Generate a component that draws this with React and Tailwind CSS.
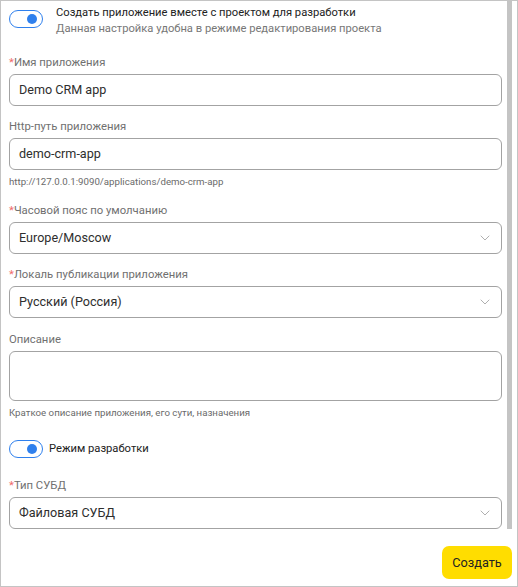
import React from 'react';

const font = { fontFamily: 'Roboto, "Noto Sans", sans-serif' };

const Toggle = () => (
  <div className="relative w-[34px] h-[18px] rounded-full border-[1.5px] border-[#2f80ed] bg-white shrink-0">
    <div className="absolute right-[5px] top-[3px] w-[10px] h-[10px] rounded-full bg-[#2f80ed]" />
  </div>
);

const Label = ({ required, children }) => (
  <div className="h-[16px] text-[11.3px] leading-[16px] text-[#707070] mb-[3px]">
    {required && <span className="text-[#f06a6a]">*</span>}
    {children}
  </div>
);

const Chevron = () => (
  <svg className="w-[10px] h-[6px] text-[#b0b0b0]" viewBox="0 0 10 6" fill="none">
    <path d="M1 1l4 4 4-4" stroke="currentColor" strokeWidth="1" strokeLinecap="round" strokeLinejoin="round" />
  </svg>
);

const Input = ({ value }) => (
  <div className="h-[32px] rounded-[6px] border border-[#a3a3a3] flex items-center px-[9px] text-[12.6px] text-[#2e2e2e]">
    {value}
  </div>
);

const Select = ({ value }) => (
  <div className="h-[32px] rounded-[6px] border border-[#a3a3a3] flex items-center justify-between pl-[9px] pr-[11px] text-[12.6px] text-[#2e2e2e]">
    <span>{value}</span>
    <Chevron />
  </div>
);

const Hint = ({ children }) => (
  <div className="text-[9.7px] leading-[14px] text-[#6a6a6a] mt-[5px]">{children}</div>
);

export default function App() {
  return (
    <div style={font} className="w-[518px] h-[587px] border border-[#c4c4c4] bg-white flex flex-col overflow-hidden">
      <div className="flex h-[528px]">
        <div className="flex-1 pl-[8px] pr-[5px] pt-[4px]">
          <div className="flex items-start gap-[13px] pt-[5px]">
            <Toggle />
            <div className="-mt-[5px]">
              <div className="text-[11.2px] leading-[16px] text-[#222]">Создать приложение вместе с проектом для разработки</div>
              <div className="text-[11.2px] leading-[16px] text-[#777]">Данная настройка удобна в режиме редактирования проекта</div>
            </div>
          </div>

          <div className="mt-[18px]">
            <Label required>Имя приложения</Label>
            <Input value="Demo CRM app" />
          </div>

          <div className="mt-[13px]">
            <Label>Http-путь приложения</Label>
            <Input value="demo-crm-app" />
            <Hint>http://127.0.0.1:9090/applications/demo-crm-app</Hint>
          </div>

          <div className="mt-[14px]">
            <Label required>Часовой пояс по умолчанию</Label>
            <Select value="Europe/Moscow" />
          </div>

          <div className="mt-[13px]">
            <Label required>Локаль публикации приложения</Label>
            <Select value="Русский (Россия)" />
          </div>

          <div className="mt-[14px]">
            <Label>Описание</Label>
            <div className="h-[50px] rounded-[6px] border border-[#a3a3a3]" />
            <Hint>Краткое описание приложения, его сути, назначения</Hint>
          </div>

          <div className="flex items-center gap-[6px] mt-[20px]">
            <Toggle />
            <span className="text-[11.2px] leading-[16px] text-[#222]">Режим разработки</span>
          </div>

          <div className="mt-[20px]">
            <Label required>Тип СУБД</Label>
            <Select value="Файловая СУБД" />
          </div>
        </div>
        <div className="w-[5px] bg-[#c4c4c4] mr-[5px]" />
      </div>
      <div className="flex-1 flex justify-end items-start pt-[17px] pr-[5px]">
        <button className="w-[70px] h-[33px] rounded-[7px] bg-[#ffdd00] text-[12.7px] text-[#222]">Создать</button>
      </div>
    </div>
  );
}
